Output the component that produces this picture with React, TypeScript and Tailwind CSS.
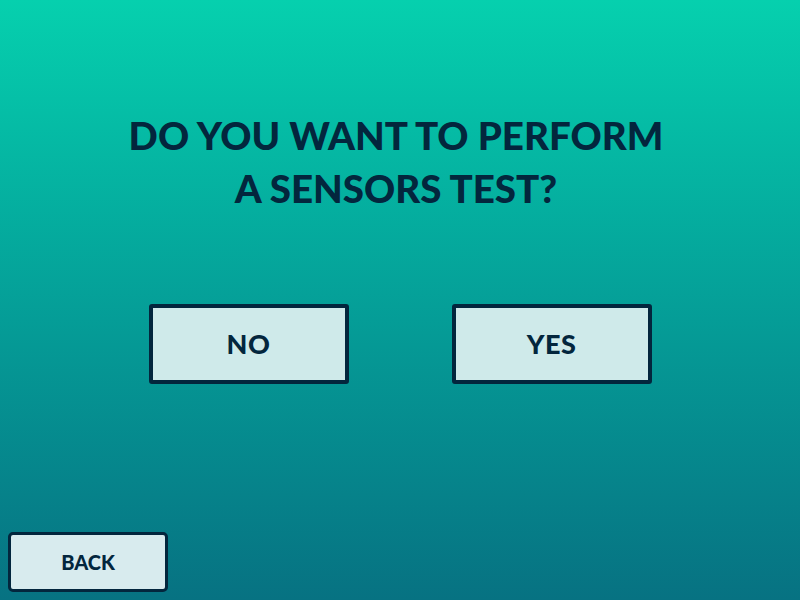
export default function App() {
  return (
    <div
      className="w-[800px] h-[600px] flex flex-col bg-gradient-to-b from-[#06d0ae] to-[#077282] text-[#03263d]"
      style={{ fontFamily: "Lato, 'Open Sans', sans-serif" }}
    >
      {/* Question */}
      <h1 className="mt-[109px] pr-[8px] text-center text-[38.5px] leading-[53px] font-black uppercase">
        Do you want to perform
        <br />
        a sensors test?
      </h1>

      {/* Choices */}
      <div className="mt-[89px] flex justify-center gap-[103px]">
        <button className="w-[200px] h-[80px] flex items-center justify-center bg-[#cfeaea] border-[4px] border-[#03263d] rounded-[3px] text-[27px] font-black tracking-[0.5px]">
          NO
        </button>
        <button className="w-[200px] h-[80px] flex items-center justify-center bg-[#cfeaea] border-[4px] border-[#03263d] rounded-[3px] text-[27px] font-black tracking-[0.5px]">
          YES
        </button>
      </div>

      {/* Back */}
      <div className="mt-auto mb-[8px] ml-[8px]">
        <button className="w-[160px] h-[60px] flex items-center justify-center bg-[#d8ebee] border-[3px] border-[#03263d] rounded-[5px] text-[20px] font-black">
          BACK
        </button>
      </div>
    </div>
  );
}
